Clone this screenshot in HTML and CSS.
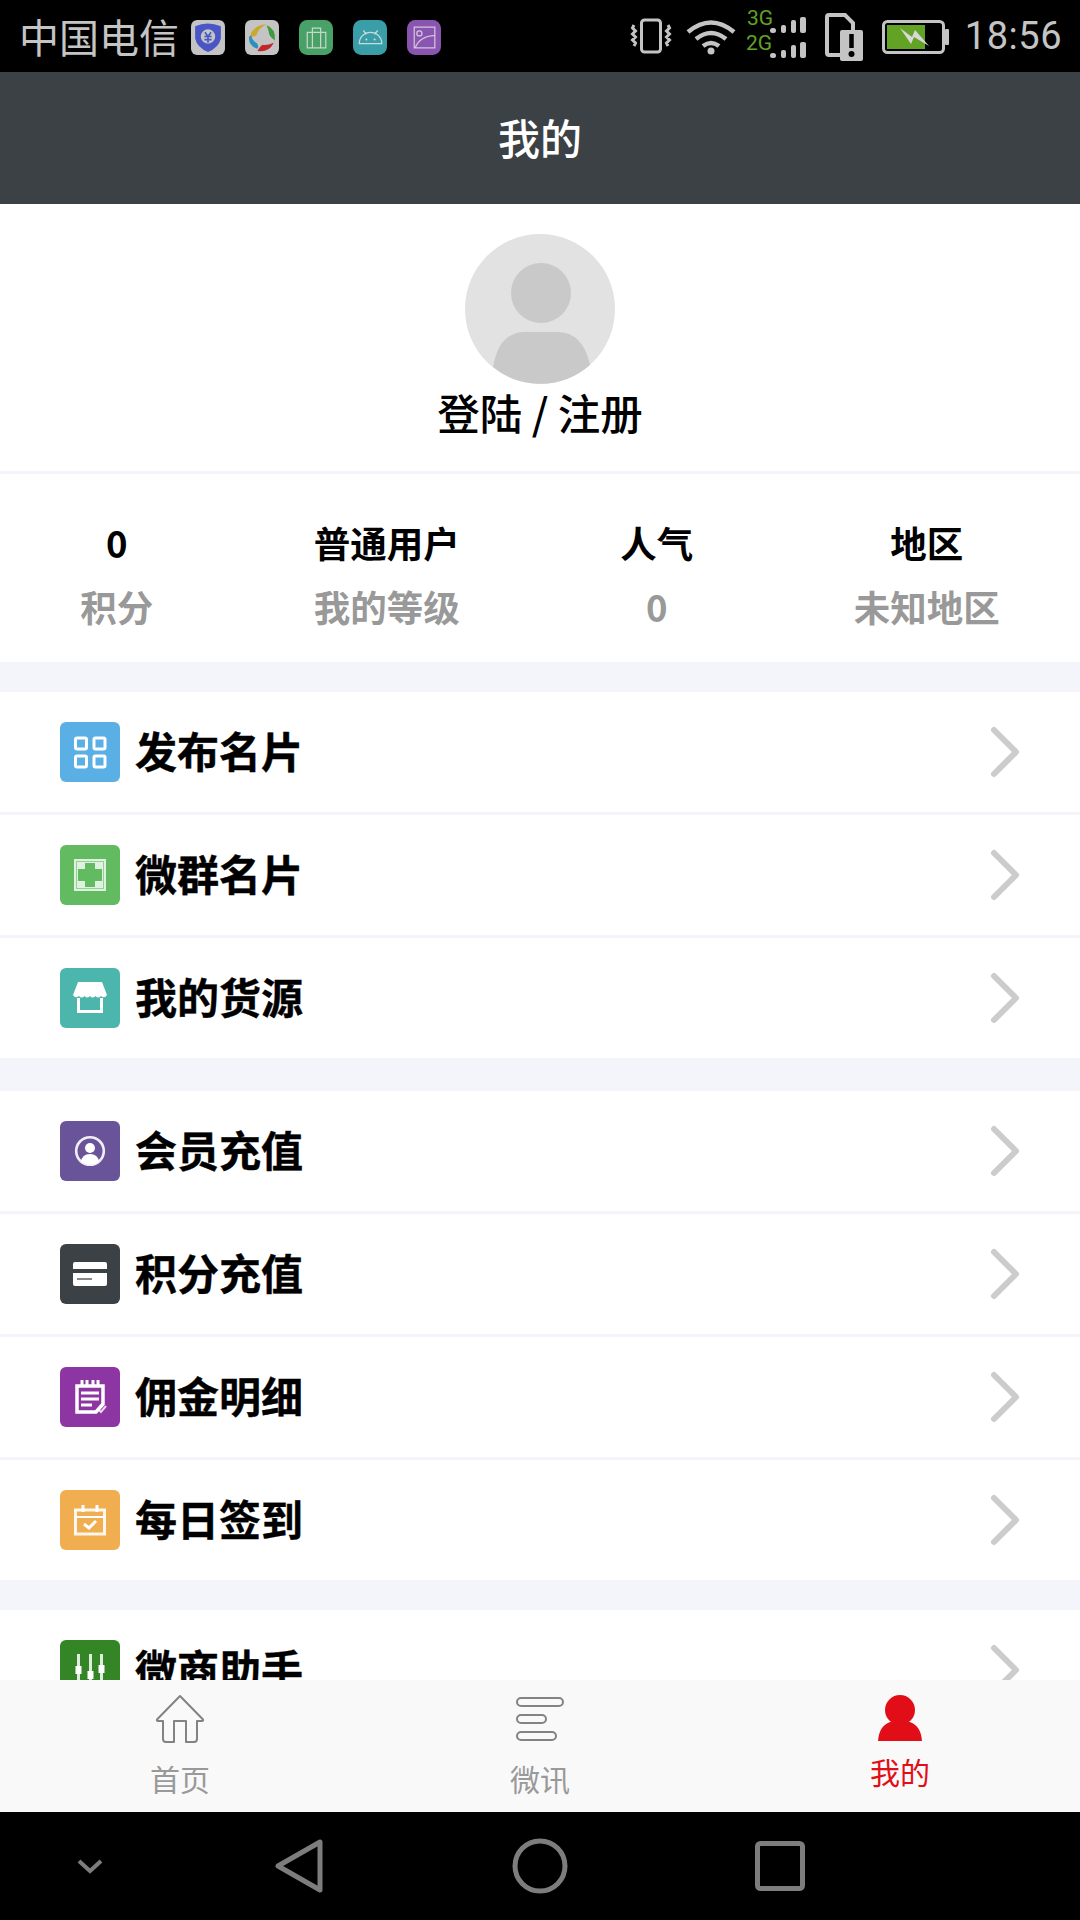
FILE: index.html
```html
<!DOCTYPE html>
<html lang="zh-CN">
<head>
    <meta charset="UTF-8">
    <meta name="viewport" content="width=device-width, initial-scale=1.0">
    <title>我的</title>
    <link rel="stylesheet" href="styles.css">
</head>
<body>
    <div class="status-bar">
        <div class="status-left">
            <span class="carrier">中国电信</span>
            <svg class="notif" viewBox="0 0 33 34"><rect width="33" height="34" rx="6" fill="#c4c4c4"/><path d="M4 6q12-5 25 0v12q-2 9-12.500 13Q6 27 4 18z" fill="#4a56c6"/><circle cx="16.500" cy="16" r="7" fill="#c4c4c4"/><path d="M13.500 12l3 4 3-4M13 16h7M13 19h7M16.500 16v6" stroke="#4a56c6" stroke-width="1.600" fill="none"/></svg>
            <svg class="notif" viewBox="0 0 33 34"><rect width="33" height="34" rx="6" fill="#c4c4c4"/><path d="M5 17Q6 6 21 4 13 8 11 15z" fill="#c8a92c"/><path d="M21 5q9 3 8 15-6-4-6-9z" fill="#3f9a3f"/><path d="M4 16q-1 9 8 12 2-3-1-6-4-2-5-7z" fill="#2b8fc0"/><path d="M12 30q11 2 16-8-7 3-11 2-3 2-5 6z" fill="#c02a2a"/></svg>
            <svg class="notif" viewBox="0 0 33 34"><rect width="33" height="34" rx="8" fill="#48a267"/><path d="M8 12h18v15H8zM13 12V8h8v4M13 12v15M21 12v15" stroke="#c6d8c8" stroke-width="1.200" fill="none"/></svg>
            <svg class="notif" viewBox="0 0 33 34"><rect width="33" height="34" rx="8" fill="#3a9ea8"/><path d="M6 23a11 11 0 0 1 22 0zM10 10l3 4M24 10l-3 4" stroke="#c8dcdc" stroke-width="1.200" fill="none"/><circle cx="13" cy="19" r="1" fill="#c8dcdc"/><circle cx="21" cy="19" r="1" fill="#c8dcdc"/></svg>
            <svg class="notif" viewBox="0 0 33 34"><rect width="33" height="34" rx="8" fill="#8a55b0"/><path d="M7 7h20v20H7zM8 27q4-11 19-12" stroke="#d2c6dc" stroke-width="1.200" fill="none"/><circle cx="12" cy="13" r="2.500" stroke="#d2c6dc" stroke-width="1.200" fill="none"/></svg>
        </div>
        <div class="status-right">
            <svg class="ic-vibrate" width="40" height="36" viewBox="0 0 40 36" fill="none" stroke="#c4c4c4" stroke-width="3"><rect x="10.500" y="2" width="19" height="32" rx="3"/><path d="M3 7l-1.500 3 3 3-3 3 3 3-3 3 3 3-1.500 3M37 7l1.500 3-3 3 3 3-3 3 3 3-3 3 1.500 3" stroke-width="3"/></svg>
            <svg class="ic-wifi" width="50" height="38" viewBox="0 0 50 38" fill="none" stroke="#c4c4c4" stroke-width="4.500"><path d="M2 14q23-19 46 0M10 21q15-12 30 0M17 28q8-6 16 0"/><circle cx="25" cy="33" r="3.500" fill="#c4c4c4" stroke="none"/></svg>
            <svg class="ic-signal" width="60" height="52" viewBox="0 0 60 52"><text x="1" y="17" class="net-type">3G</text><text x="0" y="42" class="net-type">2G</text><g fill="#c4c4c4"><rect x="24" y="20" width="6" height="5" rx="2.500"/><rect x="35" y="17" width="5" height="8" rx="2"/><rect x="45" y="12" width="5" height="13" rx="2"/><rect x="54" y="9" width="6" height="16" rx="2"/><rect x="24" y="45" width="6" height="5" rx="2.500"/><rect x="35" y="42" width="5" height="8" rx="2"/><rect x="45" y="37" width="5" height="13" rx="2"/><rect x="54" y="34" width="6" height="16" rx="2"/></g></svg>
            <svg class="ic-sim" width="38" height="48" viewBox="0 0 38 48"><path d="M4 2h16l8 8v30q0 2-2 2H4q-2 0-2-2V4q0-2 2-2z" fill="none" stroke="#c4c4c4" stroke-width="4"/><rect x="15" y="17" width="23" height="31" rx="2" fill="#c4c4c4"/><path d="M26.500 21v14" stroke="#000" stroke-width="4.500"/><circle cx="26.500" cy="41" r="3" fill="#000"/></svg>
            <svg class="ic-battery" width="67" height="34" viewBox="0 0 67 34"><rect x="1.500" y="1.500" width="60" height="31" rx="4" fill="none" stroke="#c4c4c4" stroke-width="3"/><rect x="5" y="5" width="38" height="24" fill="#62a224"/><rect x="63" y="9" width="4" height="16" rx="1" fill="#c4c4c4"/><path d="M18 8l12 9 3-7 14 16-15-9-3 7z" fill="#d8d8d8"/></svg>
            <span class="clock">18:56</span>
        </div>
    </div>

    <div class="header">我的</div>

    <div class="page">
        <div class="profile">
            <svg class="avatar" viewBox="0 0 150 150"><circle cx="75" cy="75" r="75" fill="#e2e2e2"/><circle cx="76" cy="59" r="30" fill="#c9c9c9"/><path d="M28 133q6-35 32-35h32q26 0 33 33a75 75 0 0 1-97 2z" fill="#c9c9c9"/></svg>
            <div class="login-text">登陆 / 注册</div>
        </div>

        <div class="stats">
            <div class="stat"><div class="stat-value">0</div><div class="stat-label">积分</div></div>
            <div class="stat"><div class="stat-value">普通用户</div><div class="stat-label">我的等级</div></div>
            <div class="stat"><div class="stat-value">人气</div><div class="stat-label">0</div></div>
            <div class="stat"><div class="stat-value">地区</div><div class="stat-label">未知地区</div></div>
        </div>

        <div class="menu-group menu-group-first">
            <div class="menu-row">
                <svg class="menu-icon icon-blue" viewBox="0 0 60 60" fill="none" stroke="#fff" stroke-width="3" opacity=".95"><rect x="15.500" y="16" width="11" height="11" rx="1.500"/><rect x="34" y="16" width="11" height="11" rx="1.500"/><rect x="15.500" y="34" width="11" height="11" rx="1.500"/><rect x="34" y="34" width="11" height="11" rx="1.500"/></svg>
                <span class="menu-text">发布名片</span>
                <svg class="chevron" viewBox="0 0 30 60"><path d="M4 8l22 22L4 52"/></svg>
            </div>
            <div class="menu-row">
                <svg class="menu-icon icon-green" viewBox="0 0 60 60"><rect x="14" y="14" width="32" height="32" fill="#fff" opacity=".8"/><rect x="16.500" y="16.500" width="27" height="27" fill="none" stroke="#62bb60" stroke-width="1" opacity=".6"/><path d="M25 18h10v6h7v12h-7v6H25v-6h-7V24h7z" fill="#62bb60"/></svg>
                <span class="menu-text">微群名片</span>
                <svg class="chevron" viewBox="0 0 30 60"><path d="M4 8l22 22L4 52"/></svg>
            </div>
            <div class="menu-row menu-row-last">
                <svg class="menu-icon icon-teal" viewBox="0 0 60 60"><path d="M18 14h24l5 13q-2.500 4-6 1-3 3-5.500 0-3 3-5.500 0-3 3-5.500 0-3 3-5.500 0-3.500 3-6-1z" fill="#fff"/><path d="M18.500 30v13.500h23V30" fill="none" stroke="#fff" stroke-width="3"/></svg>
                <span class="menu-text">我的货源</span>
                <svg class="chevron" viewBox="0 0 30 60"><path d="M4 8l22 22L4 52"/></svg>
            </div>
        </div>

        <div class="menu-group">
            <div class="menu-row">
                <svg class="menu-icon icon-violet" viewBox="0 0 60 60"><circle cx="30" cy="30" r="13.800" fill="none" stroke="#fff" stroke-width="2.600" opacity=".9"/><circle cx="30" cy="27" r="5" fill="#fff"/><path d="M21 41q1-8 9-8t9 8q-9 5-18 0z" fill="#fff"/></svg>
                <span class="menu-text">会员充值</span>
                <svg class="chevron" viewBox="0 0 30 60"><path d="M4 8l22 22L4 52"/></svg>
            </div>
            <div class="menu-row">
                <svg class="menu-icon icon-dark" viewBox="0 0 60 60"><rect x="13" y="18" width="34" height="24" rx="2" fill="#fff"/><rect x="13" y="25" width="34" height="4" fill="#3c4146"/><rect x="17" y="34" width="15" height="2" fill="#888"/></svg>
                <span class="menu-text">积分充值</span>
                <svg class="chevron" viewBox="0 0 30 60"><path d="M4 8l22 22L4 52"/></svg>
            </div>
            <div class="menu-row">
                <svg class="menu-icon icon-purple" viewBox="0 0 60 60" fill="none" stroke="#fff"><path d="M17 19h26v18l-7 8H17z" stroke-width="3.500"/><path d="M22 13v6M27 13v6M33 13v6M38 13v6" stroke-width="3"/><path d="M21 26h18M21 32h18M21 38h11" stroke-width="3"/><path d="M38 42l3 3 5-6" stroke-width="2" opacity=".8"/></svg>
                <span class="menu-text">佣金明细</span>
                <svg class="chevron" viewBox="0 0 30 60"><path d="M4 8l22 22L4 52"/></svg>
            </div>
            <div class="menu-row menu-row-last">
                <svg class="menu-icon icon-orange" viewBox="0 0 60 60" fill="none" stroke="#fff" stroke-width="3"><rect x="15.500" y="20" width="29" height="24" opacity=".9"/><path d="M15.500 27h29" stroke-width="2"/><path d="M23 15v7M37 15v7" stroke-width="3"/><path d="M24 34l5 4 7-7" stroke-width="3"/></svg>
                <span class="menu-text">每日签到</span>
                <svg class="chevron" viewBox="0 0 30 60"><path d="M4 8l22 22L4 52"/></svg>
            </div>
        </div>

        <div class="menu-group">
            <div class="menu-row">
                <svg class="menu-icon icon-forest" viewBox="0 0 60 60" fill="#fff"><rect x="17" y="14" width="3" height="36" opacity=".85"/><rect x="29" y="14" width="3" height="36" opacity=".85"/><rect x="40" y="14" width="3" height="36" opacity=".85"/><rect x="15.500" y="26" width="6" height="8"/><rect x="27.500" y="31" width="6" height="8"/><rect x="38.500" y="25" width="6" height="8"/></svg>
                <span class="menu-text">微商助手</span>
                <svg class="chevron" viewBox="0 0 30 60"><path d="M4 8l22 22L4 52"/></svg>
            </div>
        </div>
    </div>

    <div class="tabbar">
        <div class="tab">
            <svg class="tab-icon" width="50" height="50" viewBox="0 0 50 50" fill="none" stroke="#838383" stroke-width="2"><path d="M25 2L2 25.500q-.5 1.500 1 1.500h5v18q0 3 3 3h8V27h12v21h8q3 0 3-3V27h5q1.500 0 1-1.500z" stroke-linejoin="round"/></svg>
            <span class="tab-label">首页</span>
        </div>
        <div class="tab">
            <svg class="tab-icon" width="50" height="50" viewBox="0 0 50 50" fill="none" stroke="#838383" stroke-width="2"><rect x="2" y="4" width="46" height="8" rx="4"/><rect x="2" y="21" width="29" height="8" rx="4"/><rect x="2" y="38" width="39" height="8" rx="4"/></svg>
            <span class="tab-label">微讯</span>
        </div>
        <div class="tab tab-active">
            <svg class="tab-icon" width="44" height="46" viewBox="0 0 44 46" fill="#e20e17"><circle cx="22" cy="15" r="15"/><path d="M0 46q1-15 12-19h20q11 4 12 19z"/></svg>
            <span class="tab-label">我的</span>
        </div>
    </div>

    <div class="nav-bar">
        <svg class="nav-more" width="28" height="16" viewBox="0 0 28 16" fill="none" stroke="#7d7d7d" stroke-width="4"><path d="M3 3l11 10L25 3"/></svg>
        <svg class="nav-back" width="48" height="54" viewBox="0 0 48 54" fill="none" stroke="#7d7d7d" stroke-width="5" stroke-linejoin="round"><path d="M45 3v48L3 27z"/></svg>
        <svg class="nav-home" width="56" height="56" viewBox="0 0 56 56" fill="none" stroke="#7d7d7d" stroke-width="5"><circle cx="28" cy="28" r="25"/></svg>
        <svg class="nav-recent" width="50" height="50" viewBox="0 0 50 50" fill="none" stroke="#7d7d7d" stroke-width="5"><rect x="2.500" y="2.500" width="45" height="45" rx="3"/></svg>
    </div>
</body>
</html>
```

FILE: styles.css
```css
* {
    box-sizing: border-box;
}
html, body {
    margin: 0;
    height: 1920px;
}
body {
    width: 1080px;
    display: flex;
    flex-direction: column;
    overflow: hidden;
    font-family: "Noto Sans CJK SC", Roboto, sans-serif;
    background-color: #f4f5fa;
    color: #000;
}

/* barra de status */
.status-bar {
    height: 72px;
    flex: none;
    display: flex;
    justify-content: space-between;
    align-items: center;
    background-color: #000;
    color: #c4c4c4;
    padding: 0 18px 0 19px;
}
.status-left {
    display: flex;
    align-items: center;
}
.carrier {
    font-size: 40px;
    line-height: 72px;
    margin-right: 12px;
}
.notif {
    width: 34px;
    height: 35px;
    margin-right: 20px;
    margin-top: 2px;
}
.status-right {
    display: flex;
    align-items: center;
}
.status-right svg {
    overflow: visible;
}
.ic-vibrate {
    margin-right: 15px;
}
.ic-wifi {
    margin-right: 10px;
    margin-top: 2px;
}
.ic-signal {
    margin-right: 19px;
    margin-top: -4px;
}
.ic-sim {
    margin-right: 19px;
    margin-top: 1px;
}
.ic-battery {
    margin-right: 16px;
    margin-top: 2px;
}
.net-type {
    font-family: Roboto, sans-serif;
    font-size: 21px;
    fill: #62a224;
}
.clock {
    font-family: Roboto, sans-serif;
    font-size: 38px;
    letter-spacing: 0.5px;
}

.header {
    height: 132px;
    flex: none;
    display: flex;
    align-items: center;
    justify-content: center;
    background-color: #3c4146;
    color: #fff;
    font-size: 42px;
    font-weight: 500;
    padding-bottom: 4px;
}

.page {
    flex: 1;
    overflow: hidden;
}
.profile {
    height: 270px;
    background-color: #fff;
    border-bottom: 3px solid #f4f5fa;
    padding-top: 30px;
    display: flex;
    flex-direction: column;
    align-items: center;
}
.avatar {
    width: 150px;
    height: 150px;
    flex: none;
}
.login-text {
    font-size: 42.5px;
    font-weight: 500;
    line-height: 60px;
    margin-top: -2px;
}
.stats {
    height: 188px;
    background-color: #fff;
    display: flex;
    justify-content: space-around;
    padding-top: 37px;
    margin-bottom: 30px;
    text-align: center;
}
.stat-value, .stat-label {
    font-size: 36.5px;
    font-weight: 700;
    line-height: 64px;
}
.stat-label {
    color: #999;
}

.menu-group {
    background-color: #fff;
    margin-bottom: 30px;
}
.menu-group-first {
    margin-bottom: 33px;
}
.menu-row {
    height: 123px;
    display: flex;
    align-items: center;
    padding: 0 60px;
    border-bottom: 3px solid #f4f5fa;
}
.menu-row-last {
    height: 120px;
    border-bottom: none;
}
.menu-icon {
    width: 60px;
    height: 60px;
    flex: none;
    border-radius: 6px;
    margin-right: 15px;
}
.menu-text {
    flex: 1;
    font-size: 42px;
    font-weight: 700;
    -webkit-text-stroke: 0.4px #000;
    margin-top: -5px;
}
.chevron {
    width: 30px;
    height: 60px;
    flex: none;
    fill: none;
    stroke: #ccc;
    stroke-width: 6;
    stroke-linecap: round;
    stroke-linejoin: round;
}
.icon-blue { background-color: #52ace4; }
.icon-green { background-color: #62bb60; }
.icon-teal { background-color: #4db6ac; }
.icon-violet { background-color: #6a5499; }
.icon-dark { background-color: #3c4146; }
.icon-purple { background-color: #8e35a4; }
.icon-orange { background-color: #f1ae50; }
.icon-forest { background-color: #338526; }

.tabbar {
    height: 132px;
    flex: none;
    display: grid;
    grid-template-columns: repeat(3, 1fr);
    background-color: #f9f9f9;
}
.tab {
    display: flex;
    flex-direction: column;
    align-items: center;
    padding-top: 14px;
}
.tab-label {
    font-size: 30px;
    line-height: 42px;
    margin-top: 13px;
    color: #999;
}
.tab-active {
    padding-top: 15px;
}
.tab-active .tab-label {
    color: #e20e17;
    margin-top: 9px;
}

.nav-bar {
    height: 108px;
    flex: none;
    background-color: #000;
    display: flex;
    align-items: center;
    padding-left: 76px;
}
.nav-more {
    margin-right: 171px;
}
.nav-back {
    margin-right: 189px;
}
.nav-home {
    margin-right: 187px;
}
```
